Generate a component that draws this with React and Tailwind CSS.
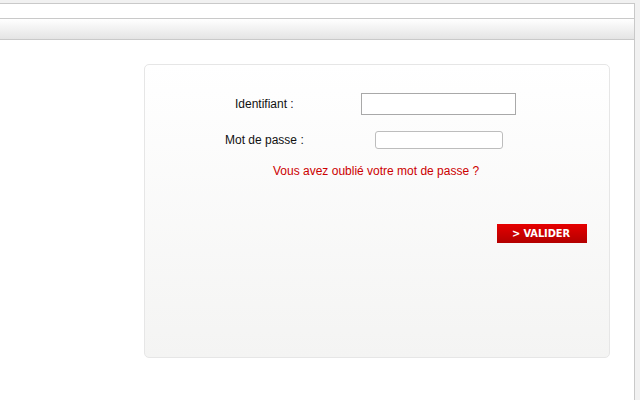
import React from "react";

export default function App() {
  return (
    <div className="w-[640px] h-[400px] bg-[#f1f1f1] overflow-hidden pt-[3px] font-['Liberation_Sans',Arial,sans-serif]">
      <div className="w-[635px] h-[397px] bg-white border-t border-r border-[#c9c9c9]">
        <div className="h-[14px]" />
        <div className="h-[22px] border-y border-[#c9c9c9] bg-gradient-to-b from-white to-[#e4e4e4]" />
        <div className="pt-[24px] pl-[144px]">
          <div className="w-[466px] h-[294px] rounded-[5px] border border-[#e6e6e6] bg-gradient-to-b from-white to-[#f4f4f3] flex flex-col">
            <div className="mt-[28px] flex items-center pl-[90px]">
              <span className="w-[126px] text-[12px] leading-[14px] text-[#111]">Identifiant :</span>
              <input
                type="text"
                className="w-[155px] h-[22px] bg-white border border-[#a9a9a9] outline-none"
              />
            </div>
            <div className="mt-[16px] flex items-center pl-[80px]">
              <span className="w-[150px] text-[12px] leading-[14px] text-[#111]">Mot de passe :</span>
              <input
                type="password"
                className="w-[128px] h-[18px] bg-white border border-[#bdbdbd] rounded-[3px] outline-none"
              />
            </div>
            <div className="mt-[15px] pl-[128px] text-[12px] leading-[14px] text-[#cc0000]">
              Vous avez oublié votre mot de passe ?
            </div>
            <div className="mt-[46px] flex justify-end pr-[22px]">
              <button className="w-[90px] h-[19px] bg-gradient-to-b from-[#e60000] to-[#b30000] text-white text-[11px] font-bold leading-[20px] tracking-[-0.1px] pr-[2px] font-['DejaVu_Sans_Condensed','Liberation_Sans',Arial,sans-serif]">
                &gt; VALIDER
              </button>
            </div>
          </div>
        </div>
      </div>
    </div>
  );
}
